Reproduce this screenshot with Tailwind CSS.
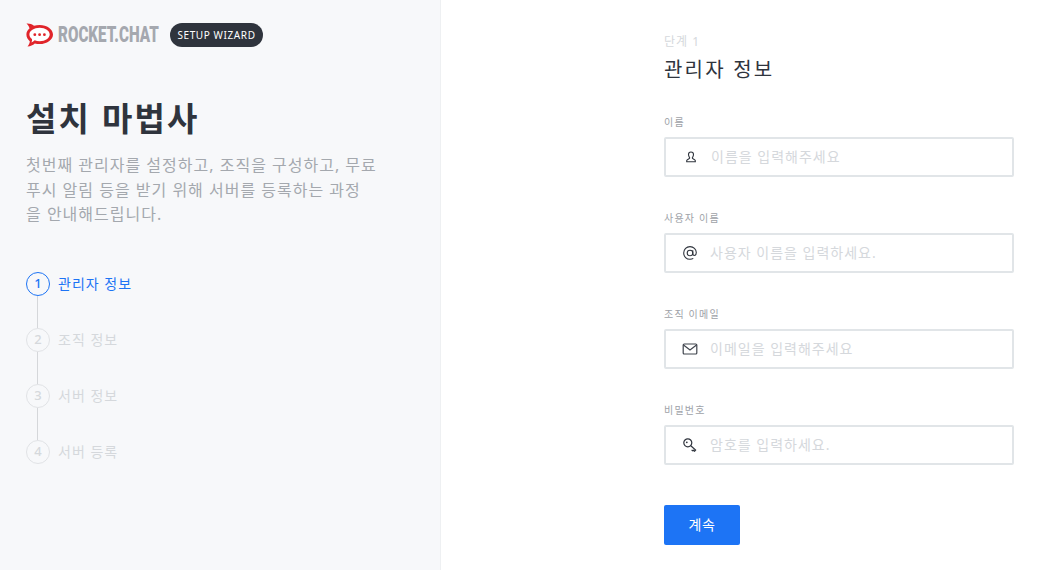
<!DOCTYPE html>
<html lang="ko">

<head>
    <meta charset="UTF-8" />
    <meta name="viewport" content="width=device-width, initial-scale=1.0" />
    <title>Setup Wizard - Rocket.Chat</title>
    <script src="https://cdn.jsdelivr.net/npm/@tailwindcss/browser@4"></script>
</head>

<body class="h-[570px] overflow-hidden flex bg-white font-['Noto_Sans','Noto_Sans_CJK_KR',sans-serif]">

    <!-- Left panel -->
    <aside class="w-[441px] h-full shrink-0 bg-[#f7f8fa] border-r border-[#eef0f2] pl-[26px] pt-[23px]">
        <header class="flex items-center h-6">
            <svg width="28" height="24" viewBox="0 0 28 24" class="shrink-0">
                <path d="M.5 .5c3-.2 5.500.7 7.500 2.300 1.800-.6 3.700-.9 5.700-.9 7.100 0 13.300 4.200 13.300 9.600 0 5.300-6.200 9.600-13.300 9.600-1.700 0-3.400-.2-4.900-.7-1.900 1.700-4.300 2.900-7.300 3 1.400-1.600 2.200-3.200 2.300-5.200C1.800 16.400.4 14.100.4 11.500c0-2.400 1.100-4.500 3.100-6C3.200 3.900 2.300 2 .5 .5z" fill="#e0242a" />
                <path d="M13.700 4.800c5.600 0 10 3 10 6.700s-4.400 6.700-10 6.700c-1.900 0-3.600-.3-5-.9-1 1-2 1.700-3.300 2.100.6-1 .8-2.200.5-3.300-1.600-1.200-2.500-2.900-2.500-4.600 0-3.700 4.600-6.700 10.300-6.700z" fill="#fff" />
                <circle cx="8.800" cy="11.700" r="1.400" fill="#e0242a" />
                <circle cx="13.600" cy="11.700" r="1.400" fill="#e0242a" />
                <circle cx="18.400" cy="11.700" r="1.400" fill="#e0242a" />
            </svg>
            <span class="ml-[4px] w-[100px] text-[22px] leading-6 font-black text-[#a5a8af] whitespace-nowrap origin-left scale-x-[0.69] font-['Roboto',sans-serif]">ROCKET.CHAT</span>
            <span class="ml-[12px] h-6 w-[93px] rounded-full bg-[#2f343d] text-white text-[10px] tracking-[0.6px] leading-6 text-center whitespace-nowrap">SETUP WIZARD</span>
        </header>

        <h1 class="mt-[49px] text-[33px] leading-[46px] font-bold text-[#2f343d] tracking-[2.200px]">설치 마법사</h1>
        <p class="mt-[11px] w-[356px] text-[16px] leading-[24.5px] tracking-[1px] text-[#a4a8ae]">첫번째 관리자를 설정하고, 조직을 구성하고, 무료<br />푸시 알림 등을 받기 위해 서버를 등록하는 과정<br />을 안내해드립니다.</p>

        <!-- Steps -->
        <ol class="mt-[45px]">
            <li class="flex items-center">
                <span class="w-6 h-6 rounded-full border border-[#1d74f5] text-[#1d74f5] text-[13px] font-medium flex items-center justify-center">1</span>
                <span class="ml-[8px] text-sm tracking-[1px] text-[#1d74f5]">관리자 정보</span>
            </li>
            <li class="w-px h-8 bg-[#d5d7da] ml-[11px]"></li>
            <li class="flex items-center">
                <span class="w-6 h-6 rounded-full border border-[#e1e3e6] text-[#d5d8dc] text-[13px] font-medium flex items-center justify-center">2</span>
                <span class="ml-[8px] text-sm tracking-[1px] text-[#d5d8dc]">조직 정보</span>
            </li>
            <li class="w-px h-8 bg-[#d5d7da] ml-[11px]"></li>
            <li class="flex items-center">
                <span class="w-6 h-6 rounded-full border border-[#e1e3e6] text-[#d5d8dc] text-[13px] font-medium flex items-center justify-center">3</span>
                <span class="ml-[8px] text-sm tracking-[1px] text-[#d5d8dc]">서버 정보</span>
            </li>
            <li class="w-px h-8 bg-[#d5d7da] ml-[11px]"></li>
            <li class="flex items-center">
                <span class="w-6 h-6 rounded-full border border-[#e1e3e6] text-[#d5d8dc] text-[13px] font-medium flex items-center justify-center">4</span>
                <span class="ml-[8px] text-sm tracking-[1px] text-[#d5d8dc]">서버 등록</span>
            </li>
        </ol>
    </aside>

    <!-- Form -->
    <main class="flex-1 pl-[223px] pt-[34px]">
        <p class="text-xs leading-4 text-[#d5d8dc] tracking-[1px]">단계 1</p>
        <h2 class="mt-[5px] text-[20px] leading-[30px] text-[#2f343d] tracking-[2.200px]">관리자 정보</h2>

        <form class="w-[350px] mt-[30px]">
            <label class="block text-[10px] leading-[14px] tracking-[1.200px] text-[#9ea2a8]">이름</label>
            <div class="mt-[8px] h-10 border-2 border-[#e1e5e8] rounded-[2px] flex items-center pl-[19px]">
                <svg width="12" height="12" viewBox="0 0 12 12" fill="none" stroke="#2f343d" stroke-width="1.100" class="shrink-0">
                    <path d="M6 1c1.600 0 2.500 1.100 2.500 2.500S7.500 6.500 7.300 7c0 .7 2.700 1.200 3 2.500v1.300H1.700V9.500c.3-1.300 3-1.800 3-2.500-.2-.5-1.200-2.100-1.200-3.500S4.400 1 6 1z" />
                </svg>
                <input type="text" placeholder="이름을 입력해주세요" class="ml-[14px] flex-1 min-w-0 outline-none text-sm tracking-[1px] placeholder:text-[#d5d8dc]" />
            </div>

            <label class="block mt-[34px] text-[10px] leading-[14px] tracking-[1.200px] text-[#9ea2a8]">사용자 이름</label>
            <div class="mt-[8px] h-10 border-2 border-[#e1e5e8] rounded-[2px] flex items-center pl-[16px]">
                <svg width="16" height="16" viewBox="0 0 16 16" fill="none" stroke="#2f343d" stroke-width="1.100" class="shrink-0">
                    <circle cx="8" cy="8" r="2.800" />
                    <path d="M10.800 5.200v3.600c0 1 .6 1.700 1.500 1.700 1.200 0 2-1.200 2-2.900 0-3.500-2.800-6-6.300-6S1.700 4.300 1.700 8s2.800 6.300 6.300 6.300c1.300 0 2.400-.3 3.300-.9" />
                </svg>
                <input type="text" placeholder="사용자 이름을 입력하세요." class="ml-[12px] flex-1 min-w-0 outline-none text-sm tracking-[1px] placeholder:text-[#d5d8dc]" />
            </div>

            <label class="block mt-[34px] text-[10px] leading-[14px] tracking-[1.200px] text-[#9ea2a8]">조직 이메일</label>
            <div class="mt-[8px] h-10 border-2 border-[#e1e5e8] rounded-[2px] flex items-center pl-[16px]">
                <svg width="16" height="16" viewBox="0 0 16 16" fill="none" stroke="#3f444d" stroke-width="1.200" class="shrink-0">
                    <rect x="1.200" y="3" width="13.600" height="10" rx="1" />
                    <path d="M1.500 4l6.500 5 6.500-5" />
                </svg>
                <input type="email" placeholder="이메일을 입력해주세요" class="ml-[12px] flex-1 min-w-0 outline-none text-sm tracking-[1px] placeholder:text-[#d5d8dc]" />
            </div>

            <label class="block mt-[34px] text-[10px] leading-[14px] tracking-[1.200px] text-[#9ea2a8]">비밀번호</label>
            <div class="mt-[8px] h-10 border-2 border-[#e1e5e8] rounded-[2px] flex items-center pl-[17px]">
                <svg width="14" height="14" viewBox="0 0 14 14" fill="none" stroke="#2f343d" stroke-width="1.200" class="shrink-0">
                    <circle cx="4.800" cy="4.800" r="4" />
                    <path d="M7.800 7.700l4.800 4.300-1 1.200-1.200-1-.8.6-1-1" />
                    <circle cx="3.800" cy="4.300" r=".9" fill="#2f343d" stroke="none" />
                </svg>
                <input type="password" placeholder="암호를 입력하세요." class="ml-[13px] flex-1 min-w-0 outline-none text-sm tracking-[1px] placeholder:text-[#d5d8dc]" />
            </div>

            <button type="button" class="mt-[40px] block w-[76px] h-10 rounded-[2px] bg-[#1d74f5] text-white text-sm tracking-[0.5px]">계속</button>
        </form>
    </main>

</body>

</html>
